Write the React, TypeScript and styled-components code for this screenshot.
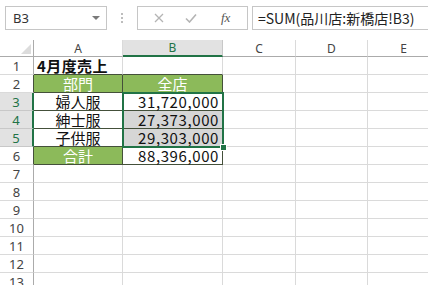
import * as React from 'react'
import styled, { createGlobalStyle, css } from 'styled-components'

const GREEN = '#217346'
const TABLE_GREEN = '#8cba5a'
const DARK = '#44503a'
const GRID = '#dadada'
const HEAD_LINE = '#ababab'

const COL_WIDTHS = [34, 89, 100, 73, 72, 72]
const COLS = ['A', 'B', 'C', 'D', 'E']
const ROW_COUNT = 13

type Fill = 'none' | 'green' | 'gray'

interface CellData {
  text: string
  fill?: Fill
  align?: 'left' | 'center' | 'right'
  bold?: boolean
}

const DATA: { [row: number]: CellData[] } = {
  1: [{ text: '4月度売上', bold: true, align: 'left' }],
  2: [
    { text: '部門', fill: 'green', align: 'center' },
    { text: '全店', fill: 'green', align: 'center' },
  ],
  3: [
    { text: '婦人服', align: 'center' },
    { text: '31,720,000', align: 'right' },
  ],
  4: [
    { text: '紳士服', align: 'center' },
    { text: '27,373,000', align: 'right', fill: 'gray' },
  ],
  5: [
    { text: '子供服', align: 'center' },
    { text: '29,303,000', align: 'right', fill: 'gray' },
  ],
  6: [
    { text: '合計', fill: 'green', align: 'center' },
    { text: '88,396,000', align: 'right' },
  ],
}

const SELECTED_ROWS = [3, 4, 5]

const inTable = (row: number, col: number) => row >= 2 && row <= 6 && col >= 0 && col <= 1

const App = () => {
  const rows = Array.from({ length: ROW_COUNT }, (_, i) => i + 1)
  return (
    <>
      <GlobalStyle />
      <Screen>
        <FormulaBar>
          <NameBox>
            <NameText>B3</NameText>
            <DropArrow />
          </NameBox>
          <Dots>
            <Dot />
            <Dot />
            <Dot />
          </Dots>
          <ButtonGroup>
            <svg width="10" height="10" viewBox="0 0 10 10">
              <path d="M1 1 L9 9 M9 1 L1 9" stroke="#b4b4b4" strokeWidth="1.3" fill="none" />
            </svg>
            <svg width="12" height="10" viewBox="0 0 12 10">
              <path d="M1 5.5 L4.5 9 L11 1.5" stroke="#b4b4b4" strokeWidth="1.6" fill="none" />
            </svg>
            <Fx>fx</Fx>
          </ButtonGroup>
          <FormulaInput>=SUM(品川店:新橋店!B3)</FormulaInput>
        </FormulaBar>

        <Sheet>
          <Corner>
            <CornerTriangle />
          </Corner>
          {COLS.map((c, i) => (
            <ColHeader key={c} $selected={c === 'B'} $last={i === COLS.length - 1}>
              {c}
            </ColHeader>
          ))}

          {rows.map(r => (
            <React.Fragment key={r}>
              <RowHeader
                $row={r + 1}
                $selected={SELECTED_ROWS.includes(r)}
                $dark={inTable(r, 0)}
              >
                {r}
              </RowHeader>
              {COLS.map((c, ci) => {
                const d = DATA[r]?.[ci]
                return (
                  <Cell
                    key={c}
                    $row={r + 1}
                    $col={ci + 2}
                    $fill={d?.fill ?? 'none'}
                    $align={d?.align ?? 'left'}
                    $bold={!!d?.bold}
                    $numeric={d?.align === 'right'}
                    $rightDark={inTable(r, ci) || inTable(r, ci + 1)}
                    $bottomDark={inTable(r, ci) || inTable(r + 1, ci)}
                  >
                    {d?.text}
                  </Cell>
                )
              })}
            </React.Fragment>
          ))}

          <Selection>
            <FillHandle />
          </Selection>
        </Sheet>
      </Screen>
    </>
  )
}

const GlobalStyle = createGlobalStyle`
  html, body {
    margin: 0;
    padding: 0;
    background: #ffffff;
    overflow: hidden;
  }
  body {
    font-family: "Noto Sans CJK JP", "Noto Sans", sans-serif;
  }
`

const Screen = styled.div`
  width: 428px;
  height: 285px;
  overflow: hidden;
  display: flex;
  flex-direction: column;
  background: #ffffff;
`

const FormulaBar = styled.div`
  height: 40px;
  flex: none;
  display: flex;
  align-items: flex-start;
  padding: 6px 0 0 5px;
  box-sizing: border-box;
`

const boxBorder = css`
  height: 24px;
  box-sizing: border-box;
  border: 1px solid #c6c6c6;
  background: #ffffff;
`

const NameBox = styled.div`
  ${boxBorder}
  width: 102px;
  display: flex;
  align-items: center;
  justify-content: space-between;
  padding: 0 6px 0 7px;
`

const NameText = styled.span`
  font-family: "Noto Sans", sans-serif;
  font-size: 13px;
  color: #333333;
  line-height: 1;
`

const DropArrow = styled.span`
  width: 0;
  height: 0;
  border-left: 4px solid transparent;
  border-right: 4px solid transparent;
  border-top: 4px solid #7a7a7a;
`

const Dots = styled.div`
  width: 30px;
  height: 24px;
  display: flex;
  flex-direction: column;
  align-items: center;
  justify-content: center;
  gap: 2px;
`

const Dot = styled.span`
  width: 2px;
  height: 2px;
  background: #bdbdbd;
`

const ButtonGroup = styled.div`
  ${boxBorder}
  width: 111px;
  display: flex;
  align-items: center;
  padding-left: 16px;
  gap: 21px;
`

const Fx = styled.span`
  font-family: "Liberation Serif", serif;
  font-style: italic;
  font-size: 13px;
  color: #555555;
  margin-left: 3px;
`

const FormulaInput = styled.div`
  ${boxBorder}
  flex: 1;
  margin-left: 4px;
  border-right: none;
  display: flex;
  align-items: center;
  padding-left: 5px;
  font-size: 14px;
  color: #222222;
  white-space: nowrap;
  overflow: hidden;
`

const Sheet = styled.div`
  display: grid;
  grid-template-columns: ${COL_WIDTHS.map(w => `${w}px`).join(' ')};
  grid-template-rows: 17px;
  grid-auto-rows: 18px;
`

const Corner = styled.div`
  box-sizing: border-box;
  border-right: 1px solid ${HEAD_LINE};
  border-bottom: 1px solid ${HEAD_LINE};
  display: flex;
  align-items: flex-end;
  justify-content: flex-end;
  padding: 0 2px 2px 0;
`

const CornerTriangle = styled.span`
  width: 0;
  height: 0;
  border-left: 10px solid transparent;
  border-bottom: 10px solid #dcdcdc;
`

const headerText = css`
  font-family: "Noto Sans", sans-serif;
  color: #444444;
  box-sizing: border-box;
  display: flex;
  align-items: center;
  justify-content: center;
`

const ColHeader = styled.div<{ $selected: boolean; $last: boolean }>`
  ${headerText}
  font-size: 12px;
  border-right: 1px solid ${props => (props.$last ? 'transparent' : GRID)};
  border-bottom: 1px solid ${HEAD_LINE};
  ${props =>
    props.$selected &&
    css`
      background: #e2e2e2;
      color: ${GREEN};
      border-bottom: 2px solid ${GREEN};
      border-right-color: #c8c8c8;
    `}
`

const RowHeader = styled.div<{ $row: number; $selected: boolean; $dark: boolean }>`
  ${headerText}
  grid-row: ${props => props.$row};
  grid-column: 1;
  font-size: 13px;
  border-right: 1px solid ${props => (props.$dark ? DARK : HEAD_LINE)};
  border-bottom: 1px solid ${GRID};
  ${props =>
    props.$selected &&
    css`
      background: #e2e2e2;
      color: ${GREEN};
      border-right: 2px solid ${GREEN};
      border-bottom-color: #c8c8c8;
    `}
`

const FILL_COLORS: { [k in Fill]: string } = {
  none: '#ffffff',
  green: TABLE_GREEN,
  gray: '#d6d6d6',
}

const Cell = styled.div<{
  $row: number
  $col: number
  $fill: Fill
  $align: 'left' | 'center' | 'right'
  $bold: boolean
  $numeric: boolean
  $rightDark: boolean
  $bottomDark: boolean
}>`
  grid-row: ${props => props.$row};
  grid-column: ${props => props.$col};
  box-sizing: border-box;
  font-size: 15px;
  line-height: 17px;
  white-space: nowrap;
  padding: 0 3px 0 3px;
  text-align: ${props => props.$align};
  font-weight: ${props => (props.$bold ? 700 : 400)};
  letter-spacing: ${props => (props.$numeric ? '0.6px' : props.$bold ? '0.4px' : '0')};
  background: ${props => FILL_COLORS[props.$fill]};
  color: ${props => (props.$fill === 'green' ? '#ffffff' : '#111111')};
  border-right: 1px solid ${props => (props.$rightDark ? DARK : GRID)};
  border-bottom: 1px solid ${props => (props.$bottomDark ? DARK : GRID)};
`

const Selection = styled.div`
  grid-column: 3;
  grid-row: 4 / 7;
  margin: -1px;
  border: 2px solid ${GREEN};
  position: relative;
  pointer-events: none;
`

const FillHandle = styled.span`
  position: absolute;
  right: -5px;
  bottom: -5px;
  width: 5px;
  height: 5px;
  background: ${GREEN};
  border: 1px solid #ffffff;
`

export default App
